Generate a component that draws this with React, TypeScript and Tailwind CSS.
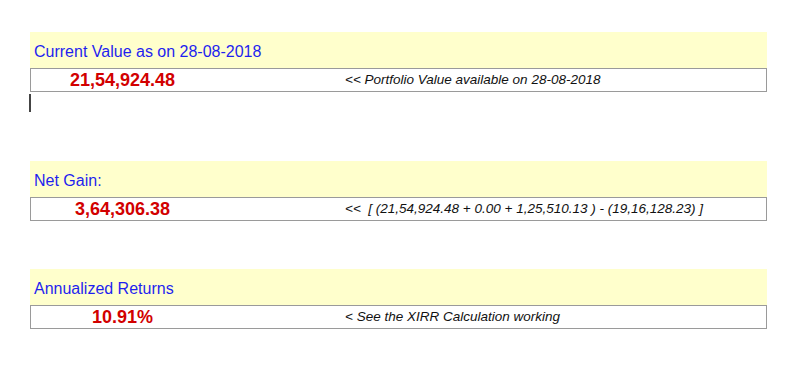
const rows = [
  {
    label: 'Current Value as on 28-08-2018',
    value: '21,54,924.48',
    note: '<< Portfolio Value available on 28-08-2018',
  },
  {
    label: 'Net Gain:',
    value: '3,64,306.38',
    note: '<<  [ (21,54,924.48 + 0.00 + 1,25,510.13 ) - (19,16,128.23) ]',
  },
  {
    label: 'Annualized Returns',
    value: '10.91%',
    note: '< See the XIRR Calculation working',
  },
]

function Block({ label, value, note }: { label: string; value: string; note: string }) {
  return (
    <div className="w-[737px]">
      <div className="h-[36px] bg-[#ffffcc] flex items-center pl-[4px] pt-[3px]">
        <span className="text-[16px] text-[#1f1fef]">{label}</span>
      </div>
      <div className="h-[24px] border border-[#9a9a9a] bg-white flex items-center">
        <div className="w-[183px] text-center text-[18px] font-bold text-[#d20000] leading-none">{value}</div>
        <div className="pl-[131px] text-[13.5px] italic text-[#111] whitespace-pre">{note}</div>
      </div>
    </div>
  )
}

export default function App() {
  return (
    <div className="w-[800px] h-[373px] bg-white pl-[30px] pt-[32px]" style={{ fontFamily: '"Liberation Sans", Arial, sans-serif' }}>
      <Block {...rows[0]} />
      {/* text cursor */}
      <div className="w-[2px] h-[18px] bg-[#444] mt-[2px] -ml-[1px]"></div>
      <div className="mt-[49px]">
        <Block {...rows[1]} />
      </div>
      <div className="mt-[48px]">
        <Block {...rows[2]} />
      </div>
    </div>
  )
}
